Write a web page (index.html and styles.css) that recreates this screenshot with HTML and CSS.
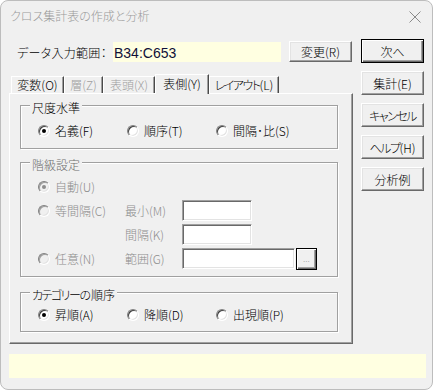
FILE: index.html
```html
<!DOCTYPE html>
<html lang="ja">
<head>
    <meta charset="UTF-8">
    <meta name="viewport" content="width=device-width, initial-scale=1.0">
    <title>クロス集計表の作成と分析</title>
    <link rel="stylesheet" href="styles.css">
</head>
<body>
    <div class="window">
        <div class="titlebar">
            <span class="title">クロス集計表の作成と分析</span>
            <svg class="close" width="12" height="12" viewBox="0 0 12 12">
                <path d="M0.5 0.5 L11.5 11.5 M11.5 0.5 L0.5 11.5" stroke="#8a8a8a" stroke-width="1" fill="none"/>
            </svg>
        </div>
        <div class="dialog">
            <div class="main">
                <div class="range-row">
                    <span class="range-label">データ入力範囲：</span>
                    <div class="range-value">B34:C653</div>
                    <button class="btn range-btn">変更(R)</button>
                </div>
                <div class="tabs">
                    <div class="tab t1">変数(O)</div>
                    <div class="tab t2 off">層(Z)</div>
                    <div class="tab t3 off">表頭(X)</div>
                    <div class="tab t4 active">表側(Y)</div>
                    <div class="tab t5"><span class="kana">レイアウト</span>(L)</div>
                </div>
                <div class="panel">
                    <div class="group scale">
                        <span class="group-title">尺度水準</span>
                        <div class="radio-row">
                            <label class="radio"><span class="dot checked"></span>名義(F)</label>
                            <label class="radio"><span class="dot"></span>順序(T)</label>
                            <label class="radio"><span class="dot"></span>間隔･比(S)</label>
                        </div>
                    </div>
                    <div class="group classes disabled">
                        <span class="group-title">階級設定</span>
                        <div class="class-grid">
                            <label class="radio"><span class="dot checked"></span>自動(U)</label>
                            <span></span>
                            <span></span>

                            <label class="radio"><span class="dot"></span>等間隔(C)</label>
                            <span class="field-label">最小(M)</span>
                            <div class="textbox"></div>

                            <span></span>
                            <span class="field-label">間隔(K)</span>
                            <div class="textbox"></div>

                            <label class="radio"><span class="dot"></span>任意(N)</label>
                            <span class="field-label">範囲(G)</span>
                            <div class="range-pick">
                                <div class="textbox wide"></div>
                                <button class="btn pick-btn">...</button>
                            </div>
                        </div>
                    </div>
                    <div class="group order">
                        <span class="group-title"><span class="kana">カテゴリー</span>の順序</span>
                        <div class="radio-row">
                            <label class="radio"><span class="dot checked"></span>昇順(A)</label>
                            <label class="radio"><span class="dot"></span>降順(D)</label>
                            <label class="radio"><span class="dot"></span>出現順(P)</label>
                        </div>
                    </div>
                </div>
            </div>
            <div class="side">
                <button class="btn default">次へ</button>
                <button class="btn">集計(E)</button>
                <button class="btn"><span class="kana">キャンセル</span></button>
                <button class="btn"><span class="kana">ヘルプ</span>(H)</button>
                <button class="btn">分析例</button>
            </div>
        </div>
        <div class="status"></div>
    </div>
</body>
</html>
```

FILE: styles.css
```css
body {
    margin: 0;
    font-family: "Noto Sans CJK JP", "Liberation Sans", sans-serif;
    font-size: 12px;
    font-weight: 300;
    line-height: 16px;
    color: #000;
    font-feature-settings: "palt";
}

.window {
    width: 433px;
    height: 390px;
    box-sizing: border-box;
    border: 1px solid #bdbdbd;
    border-radius: 8px;
    background: #f0f0f0;
    overflow: hidden;
}

/* narrow katakana, like the dialog font */
.kana {
    letter-spacing: -1.5px;
}

/* title bar */
.titlebar {
    height: 30px;
    display: flex;
    align-items: center;
    justify-content: space-between;
    padding: 0 11px 0 9px;
}

.title {
    color: #9a9a9a;
    font-size: 12px;
}

.close {
    display: block;
    margin-top: 1px;
}

.dialog {
    display: flex;
    padding: 8px 0 0 8px;
}

.main {
    width: 344px;
    margin-top: 2px;
}

/* buttons */
.btn {
    font-family: inherit;
    font-size: 12px;
    font-weight: 300;
    font-feature-settings: "palt";
    color: #000;
    background: #f0f0f0;
    padding: 0;
    margin: 0;
    border: 1px solid;
    border-color: #fff #696969 #696969 #fff;
    box-shadow: inset -1px -1px #a0a0a0, inset 1px 1px #e3e3e3;
}

.btn.default {
    border-color: #000;
    box-shadow: inset 1px 1px #fff, inset -1px -1px #696969, inset -2px -2px #a0a0a0;
}

.range-row {
    display: flex;
    align-items: center;
    height: 21px;
}

.range-label {
    width: 104px;
    padding-left: 8px;
    box-sizing: border-box;
    padding-top: 2px;
    letter-spacing: 0.3px;
}

.range-value {
    width: 168px;
    height: 20px;
    margin-top: 1px;
    background: #ffffe1;
    color: #101038;
    font-family: "Liberation Sans", sans-serif;
    font-weight: 400;
    font-size: 14px;
    line-height: 22px;
    padding-left: 1px;
    box-sizing: border-box;
}

.range-btn {
    width: 63px;
    height: 21px;
    margin-left: 8px;
}

/* tabs */
.tabs {
    display: flex;
    align-items: flex-end;
    height: 19px;
    margin-top: 12px;
    padding-left: 2px;
}

.tab {
    height: 17px;
    box-sizing: border-box;
    border-top: 1px solid #fff;
    border-left: 1px solid #fff;
    border-right: 1px solid #4a4a4a;
    box-shadow: inset -1px 0 #a0a0a0;
    text-align: center;
    line-height: 16px;
    white-space: nowrap;
}

.tab.off {
    color: #a0a0a0;
}

.t1 { width: 53px; }
.t2 { width: 39px; }
.t3 { width: 52px; }
.t4 { width: 54px; }
.t5 { width: 70px; }

.tab.active {
    height: 20px;
    margin-bottom: -1px;
    position: relative;
    z-index: 1;
    background: #f0f0f0;
    line-height: 17px;
}

/* tab page */
.panel {
    box-sizing: border-box;
    border: 1px solid;
    border-color: #fff #696969 #696969 #fff;
    box-shadow: inset -1px -1px #a0a0a0;
    padding: 11px 14px 11px 10px;
}

.group {
    position: relative;
    border: 1px solid #a0a0a0;
    box-shadow: inset 1px 1px #fff, 1px 1px #fff;
}

.group-title {
    position: absolute;
    top: -5px;
    left: 9px;
    padding: 0 2px;
    line-height: 14px;
    background: #f0f0f0;
}

.scale {
    padding: 17px 0 9px 17px;
}

.classes {
    margin-top: 13px;
    padding: 13px 0 7px 17px;
}

.order {
    margin-top: 15px;
    padding: 14px 0 8px 17px;
}

.radio-row {
    display: grid;
    grid-template-columns: 89px 89px 89px;
    height: 16px;
}

.radio {
    display: flex;
    align-items: center;
    gap: 5px;
    white-space: nowrap;
}

.dot {
    width: 12px;
    height: 12px;
    box-sizing: border-box;
    border-radius: 50%;
    background: #fff;
    border: 1px solid;
    border-color: #808080 #fff #fff #808080;
    box-shadow: inset 1px 1px #404040, inset -1px -1px #e3e3e3;
    display: flex;
    align-items: center;
    justify-content: center;
}

.dot.checked::after {
    content: "";
    width: 4px;
    height: 4px;
    border-radius: 50%;
    background: #000;
}

/* disabled group */
.disabled .group-title {
    color: #6d6d6d;
}

.disabled .radio,
.disabled .field-label {
    color: #8d8d8d;
}

.disabled .dot {
    background: #f0f0f0;
    box-shadow: inset 1px 1px #a0a0a0, inset -1px -1px #e3e3e3;
}

.disabled .dot.checked::after {
    background: #8d8d8d;
}

.class-grid {
    display: grid;
    grid-template-columns: 87px 57px auto;
    grid-auto-rows: 21px;
    row-gap: 3px;
    align-items: center;
}

.textbox {
    width: 70px;
    height: 21px;
    box-sizing: border-box;
    background: #fff;
    border: 1px solid;
    border-color: #a0a0a0 #fff #fff #a0a0a0;
    box-shadow: inset 1px 1px #696969, inset -1px -1px #e3e3e3;
}

.textbox.wide {
    width: 113px;
}

.range-pick {
    display: flex;
    align-items: flex-start;
    gap: 1px;
}

.pick-btn {
    width: 21px;
    height: 22px;
    border-color: #000;
    box-shadow: inset 1px 1px #fff, inset -1px -1px #696969, inset -2px -2px #a0a0a0;
    color: #a0a0a0;
    font-size: 9px;
    line-height: 18px;
}

/* right column */
.side {
    display: flex;
    flex-direction: column;
    gap: 8px;
    margin-left: 8px;
}

.side .btn {
    width: 63px;
    height: 24px;
}

.status {
    height: 24px;
    margin: 10px 6px 0 8px;
    background: #ffffe1;
}
```
